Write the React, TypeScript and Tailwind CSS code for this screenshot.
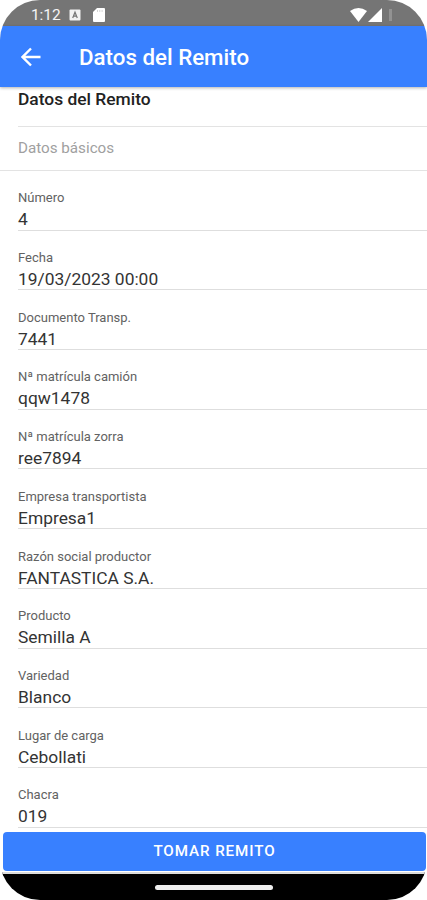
const fields = [
  { label: 'Número', value: '4' },
  { label: 'Fecha', value: '19/03/2023 00:00' },
  { label: 'Documento Transp.', value: '7441' },
  { label: 'Nª matrícula camión', value: 'qqw1478' },
  { label: 'Nª matrícula zorra', value: 'ree7894' },
  { label: 'Empresa transportista', value: 'Empresa1' },
  { label: 'Razón social productor', value: 'FANTASTICA S.A.' },
  { label: 'Producto', value: 'Semilla A' },
  { label: 'Variedad', value: 'Blanco' },
  { label: 'Lugar de carga', value: 'Cebollati' },
  { label: 'Chacra', value: '019' },
]

function StatusBar() {
  return (
    <div className="flex h-[26px] shrink-0 items-center bg-[#757575] pl-[31px] pr-[35px] pt-[3px] text-[#f5f5f5]">
      <span className="w-[30px] pt-[2px] text-[15.5px] leading-none tracking-[-0.1px]">1:12</span>
      <svg className="ml-[8px]" width="12" height="12" viewBox="0 0 12 12">
        <rect x="0.5" y="0.5" width="11" height="11" rx="1" fill="#f2f2f2" />
        <path d="M3.7 9 6 3.2 8.3 9M4.5 7.2h3" fill="none" stroke="#757575" strokeWidth="1.2" />
      </svg>
      <svg className="ml-[12px]" width="12" height="14" viewBox="0 0 12 14">
        <path d="M4 0h7a1 1 0 0 1 1 1v12a1 1 0 0 1-1 1H1a1 1 0 0 1-1-1V4z" fill="#fff" />
        <path d="M4.5 2v2M6.8 2v2M9.1 2v2" stroke="#d5d5d5" strokeWidth="1" />
      </svg>
      <svg className="ml-auto" width="17" height="14" viewBox="0 0 17 14">
        <path d="M0 3Q8.5-3 17 3L8.5 14z" fill="#fff" />
      </svg>
      <svg className="ml-px" width="14" height="14" viewBox="0 0 14 14">
        <path d="M14 0v14H0z" fill="#fff" />
      </svg>
      <span className="ml-[7px] h-[12px] w-[3px] bg-[#929292]" />
    </div>
  )
}

function Field({ label, value }: { label: string; value: string }) {
  return (
    <div className="ml-[18px] h-[59.7px] border-b border-[#dedede] pt-[19.4px]">
      <p className="text-[13px] leading-[16px] text-[#626262]">{label}</p>
      <p className="mt-[2px] text-[17.4px] leading-[22px] text-[#333]">{value}</p>
    </div>
  )
}

export default function App() {
  return (
    <main className="flex h-[900px] w-[427px] flex-col overflow-hidden rounded-[40px] bg-white font-[Roboto,sans-serif]">
      <StatusBar />

      <header className="z-10 flex h-[61px] shrink-0 items-center bg-[#3880ff] text-white shadow-[0_1px_3px_rgba(0,0,0,0.3)]">
        <svg className="ml-[21px]" width="20" height="20" viewBox="0 0 20 20" fill="none" stroke="currentColor" strokeWidth="2.4">
          <path d="M19.5 10H2M10 1.5 1.5 10l8.5 8.5" />
        </svg>
        <h1 className="ml-[38px] pt-px text-[22.3px] font-medium leading-none">Datos del Remito</h1>
      </header>

      <section className="h-[744px] shrink-0 overflow-hidden">
        <h2 className="ml-[18px] h-[39.5px] border-b border-[#e3e3e3] pt-[2px] text-[17.4px] font-medium leading-[20px] text-[#222]">
          Datos del Remito
        </h2>
        <div className="h-[44.5px] border-b border-[#e3e3e3] pl-[18px] pt-[11px] text-[15.2px] leading-[20px] text-[#a0a0a0]">
          Datos básicos
        </div>
        {fields.map((field) => (
          <Field key={field.label} label={field.label} value={field.value} />
        ))}
      </section>

      <footer className="flex grow flex-col">
        <button className="ml-[3px] mr-px mt-px h-[39px] shrink-0 rounded-[4px] bg-[#3880ff] text-[15.2px] font-medium tracking-[0.9px] text-white">
          TOMAR REMITO
        </button>
        <div className="mt-px flex grow justify-center border-t-2 border-[#dcdcdc] bg-black pt-[11px]">
          <span className="h-[5px] w-[118px] rounded-full bg-[#eee]" />
        </div>
      </footer>
    </main>
  )
}
